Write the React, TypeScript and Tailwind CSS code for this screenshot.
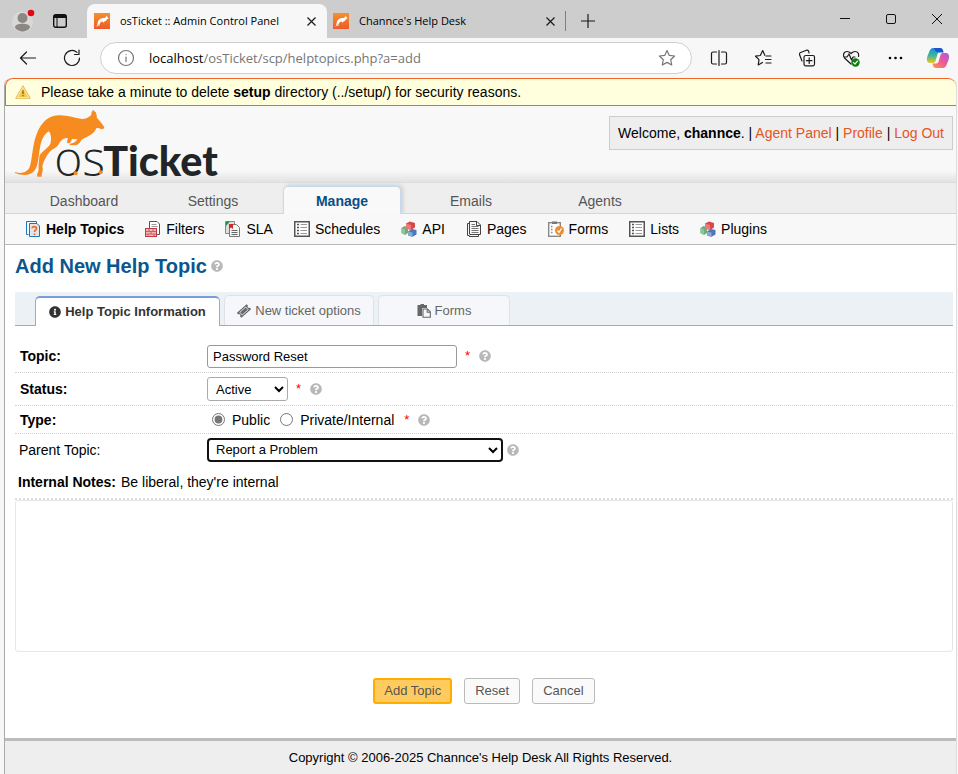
import React from "react";
import { FaInfoCircle, FaQuestionCircle } from "react-icons/fa";

const ROO =
  "M42 288C60 294 80 291 87 270C95 245 94 205 108 172C120 142 140 119 172 118C200 117 222 127 243 129C256 130 265 122 271 117C270 110 274 104 277 102C280 106 282 108 284 108C287 112 287 120 288 126C295 134 304 143 310 154C309 159 304 161 300 159C294 157 290 155 286 157C282 166 275 174 264 179C255 184 246 187 241 192C237 200 232 207 222 208L206 207L207 203C216 203 224 199 229 190L214 189C208 195 210 200 204 202L198 201L200 186C190 184 180 192 175 202C168 216 156 218 148 226C138 236 128 254 124 272C128 282 122 291 122 302L109 302C106 296 112 288 113 280C112 270 114 250 116 238C124 224 144 216 149 200C152 186 150 176 144 166C130 174 122 190 118 210C112 236 114 262 102 282C90 300 64 300 42 291Z";

function Favicon() {
  return (
    <svg width="16" height="16" viewBox="0 0 16 16" className="shrink-0" aria-hidden="true">
      <defs>
        <linearGradient id="fav" x1="0" y1="0" x2="0" y2="1">
          <stop offset="0" stopColor="#f7902a" />
          <stop offset="1" stopColor="#ee5a28" />
        </linearGradient>
      </defs>
      <rect width="16" height="16" fill="url(#fav)" />
      <path
        d="M1.500 13.500C4 13.500 3 10 4.500 7.500C5.800 5.300 8 4.600 10.300 5C11.500 5 12 4 12.800 2.800L13.400 4L14.600 5.600L13 6.200C12.300 7.600 11.300 8 10.500 8.400L9.300 9.800L8.800 8.600C7 8.600 6.300 9.800 5.600 11L5.300 13L4.600 13.200L4.600 10.500C4.200 12.300 3.300 14 1.500 13.500Z"
        fill="#fff"
      />
    </svg>
  );
}

function Logo() {
  return (
    <svg width="204" height="72" viewBox="36 96 612 216" className="overflow-visible" role="img" aria-label="osTicket">
      <path d={ROO} fill="#f68b1f" />
      <g fill="#222527">
        <text x="160" y="300" fontSize="144" fontWeight="300" fontFamily="'Open Sans', sans-serif">os</text>
        <text x="307" y="300" fontSize="124" fontWeight="900" fontFamily="Lato, sans-serif">Ticket</text>
      </g>
      <circle cx="224" cy="292" r="6" fill="#f68b1f" />
      <circle cx="299" cy="289" r="6" fill="#f68b1f" />
    </svg>
  );
}

function Stroke({ children, size = 18, color = "#1b1b1b" }: { children: React.ReactNode; size?: number; color?: string }) {
  return (
    <svg width={size} height={size} viewBox="0 0 18 18" fill="none" stroke={color} strokeWidth="1.2" strokeLinecap="round" strokeLinejoin="round" aria-hidden="true">
      {children}
    </svg>
  );
}

function Copilot() {
  return (
    <svg width="24" height="22" viewBox="0 0 24 22" aria-hidden="true">
      <defs>
        <linearGradient id="cpa" x1="0" y1="0" x2="0" y2="1">
          <stop offset="0" stopColor="#1b8fe0" />
          <stop offset="0.5" stopColor="#3fb59a" />
          <stop offset="1" stopColor="#f5c61e" />
        </linearGradient>
        <linearGradient id="cpb" x1="1" y1="0" x2="0" y2="1">
          <stop offset="0" stopColor="#a55bea" />
          <stop offset="0.5" stopColor="#ee5a93" />
          <stop offset="1" stopColor="#fa9a4a" />
        </linearGradient>
      </defs>
      <path d="M8 1H14C16 1 17 2.500 17.500 5H14C12 5 11.500 7 11 9L9.500 14C9 15.500 8 16 6.500 16H4C0.500 16 0.500 12 1.500 9L3.500 4C4.500 1.500 6 1 8 1Z" fill="url(#cpa)" />
      <path d="M8 1H14C16 1 17 2.500 17.500 5.500H13C9 5.500 8 1.500 8 1Z" fill="#1d55c9" />
      <path d="M16 21H10C8 21 7 19.500 6.500 16.500H10C12 16.500 12.500 15 13 13L14.500 8C15 6.500 16 6 17.500 6H20C23.500 6 23.500 10 22.500 13L20.500 18C19.500 20.500 18 21 16 21Z" fill="url(#cpb)" />
    </svg>
  );
}

function TicketIcon() {
  return (
    <svg width="14" height="14" viewBox="0 0 14 14" aria-hidden="true">
      <g transform="rotate(-42 7 7)">
        <path d="M0.500 3.700H13.500V5.800A1.200 1.200 0 0 0 13.500 8.200V10.300H0.500V8.200A1.200 1.200 0 0 0 0.500 5.800Z" fill="#666" />
        <rect x="3" y="5.200" width="8" height="3.600" fill="none" stroke="#f5f7fa" strokeWidth="0.800" />
      </g>
    </svg>
  );
}

function PasteIcon() {
  return (
    <svg width="14" height="14" viewBox="0 0 14 14" aria-hidden="true">
      <path d="M0.500 1H3.500V0H7V1H10V4H5V12H0.500Z" fill="#666" />
      <path d="M6 5H10.500L13.300 7.800V13.300H6Z" fill="#f5f7fa" stroke="#666" strokeWidth="1.100" />
      <path d="M10.200 5V8.200H13.300" fill="none" stroke="#666" strokeWidth="1.100" />
    </svg>
  );
}

function DocIcon({ kind }: { kind: string }) {
  return (
    <svg width="16" height="16" viewBox="0 0 16 16" fill="none" className="shrink-0" aria-hidden="true">
      {kind === "help" && (
        <>
          <path d="M3.500 13.500H1.500V0.500H11.500V2" stroke="#1a76bd" />
          <path d="M4.500 2.500H12L14.500 5V15.500H4.500Z" fill="#e2e6ea" stroke="#1a76bd" />
          <path d="M7.200 7.200C7.200 5 11.500 5 11.500 7.400C11.500 9 9.500 9 9.500 11M9.500 12.500V14" stroke="#ee6a24" strokeWidth="1.700" />
        </>
      )}
      {kind === "filters" && (
        <>
          <path d="M4.500 7V0.500H12L14.500 3V13.500H12" fill="#fff" stroke="#555" />
          <path d="M6.500 3.500H11.500M6.500 5.500H12.500" stroke="#999" />
          <rect x="0.500" y="7.500" width="11" height="8" fill="#f3b7b7" stroke="#bd3b41" />
          <path d="M1 10.500H11M1 13H11M4 8V10M8 8V10M6 11V13M3 13V15M9 13V15" stroke="#bd3b41" strokeWidth="0.700" />
        </>
      )}
      {kind === "sla" && (
        <>
          <path d="M0.500 0.500H9.500V12.500H0.500Z" fill="#ddd" stroke="#888" />
          <path d="M1 0.500H5L1 5Z" fill="#17984a" />
          <path d="M4.500 3.500H11.500L14.500 6.500V15.500H4.500Z" fill="#f5f5f5" stroke="#777" />
          <path d="M6.500 9.500H12.500M6.500 11.500H12.500M6.500 13.500H12.500" stroke="#666" />
          <path d="M4 3H8V8L6 6.500L4 8Z" fill="#d92525" />
        </>
      )}
      {kind === "list" && (
        <>
          <rect x="0.750" y="0.750" width="14.500" height="14.500" fill="#fff" stroke="#555" strokeWidth="1.500" />
          <path d="M3 3.500H5M3 6.500H5M3 9.500H5M3 12.500H5" stroke="#555" strokeWidth="1.600" />
          <path d="M6.500 3.500H13M6.500 6.500H13M6.500 9.500H13M6.500 12.500H13" stroke="#999" />
        </>
      )}
      {kind === "blocks" && (
        <>
          <path d="M0.500 7L3.500 5L7 6V12L4 14L0.500 12Z" fill="#6fae7c" />
          <path d="M0.500 7L4 8.500V14L0.500 12Z" fill="#8ec797" />
          <path d="M5 2.500L9 0.500L14 2V6.500L10 9L5 7.500Z" fill="#d94848" />
          <path d="M5 2.500L10 4V9L5 7.500Z" fill="#ee7a78" />
          <path d="M7 10.500L11 8L15.500 9V13.500L11.500 15.800L7 14.500Z" fill="#4d78b5" />
          <path d="M7 10.500L11.500 11.500V15.800L7 14.500Z" fill="#84a8d8" />
        </>
      )}
      {kind === "pages" && (
        <>
          <path d="M3.500 14.500H1.500V2.500H3M3.500 13V0.500H11L14.500 4V13.500H3.500" stroke="#444" />
          <path d="M3 15.500H12.500V14M10.500 0.500V4.500H14.500" stroke="#444" />
          <path d="M5.500 3.500H9M5.500 5.500H12.500M5.500 7.500H12.500M5.500 9.500H12.500M5.500 11.500H12.500" stroke="#777" />
        </>
      )}
      {kind === "forms" && (
        <>
          <rect x="0.700" y="1.700" width="11.600" height="13.600" fill="#fff" stroke="#888" strokeWidth="1.400" />
          <rect x="4" y="0.500" width="5" height="2.500" fill="#777" />
          <path d="M3 5.500H4.500M3 8.500H4.500M3 11.500H4.500" stroke="#888" strokeWidth="1.500" />
          <circle cx="11.500" cy="9.500" r="4.500" fill="#f28a2e" />
          <path d="M9.500 9.500L11 11.300L13.500 7.500" stroke="#fff" strokeWidth="1.300" />
        </>
      )}
    </svg>
  );
}

const subNav = [
  ["Help Topics", "help"],
  ["Filters", "filters"],
  ["SLA", "sla"],
  ["Schedules", "list"],
  ["API", "blocks"],
  ["Pages", "pages"],
  ["Forms", "forms"],
  ["Lists", "list"],
  ["Plugins", "blocks"],
];

function Tip() {
  return (
    <button type="button" aria-label="Help" className="text-[#b8b8b8]">
      <FaQuestionCircle size={12} />
    </button>
  );
}

function Star() {
  return <span className="text-[13px] leading-4 text-[#f00]">*</span>;
}

function CloseTab() {
  return (
    <button type="button" aria-label="Close tab">
      <svg width="9" height="9" viewBox="0 0 9 9" stroke="#1b1b1b" strokeWidth="1.200">
        <path d="M0.500 0.500L8.500 8.500M8.500 0.500L0.500 8.500" />
      </svg>
    </button>
  );
}

function BrowserBar() {
  return (
    <header className="font-['Open_Sans',sans-serif] text-black">
      <div className="flex h-[38px] items-end bg-[#cdcdcd]">
        <div className="flex h-full w-[87px] shrink-0 items-center gap-[18px] pt-1 pl-3">
          <svg width="23" height="24" viewBox="0 0 23 24" aria-label="Profile" role="img">
            <circle cx="10.500" cy="13" r="10.500" fill="#dad8d6" />
            <circle cx="10.500" cy="9" r="5" fill="#8b8785" />
            <path d="M3 18C3 13.500 18 13.500 18 18C18 20 14 22.500 10.500 22.500S3 20 3 18Z" fill="#8b8785" />
            <circle cx="19" cy="4" r="3.300" fill="#e20613" />
          </svg>
          <svg width="14" height="14" viewBox="0 0 14 14" fill="none" aria-hidden="true">
            <rect x="0.700" y="0.700" width="12.600" height="12.600" rx="2" stroke="#111" strokeWidth="1.400" />
            <path d="M1 1H13V4H1Z" fill="#111" />
            <path d="M4 4V13" stroke="#111" />
          </svg>
        </div>
        <div className="flex h-[34px] w-[240px] shrink-0 items-center gap-2.5 rounded-t-lg bg-[#f7f7f7] pr-[11px] pl-[7px]">
          <Favicon />
          <span className="grow text-[11px] whitespace-nowrap">osTicket :: Admin Control Panel</span>
          <CloseTab />
        </div>
        <div className="flex h-[34px] w-[238px] shrink-0 items-center gap-2.5 pr-2.5 pl-[6px]">
          <Favicon />
          <span className="grow text-[11px] whitespace-nowrap">Channce's Help Desk</span>
          <CloseTab />
        </div>
        <div className="flex h-[34px] grow items-center gap-[15px]">
          <span className="h-5 w-px bg-[#808080]" />
          <button type="button" aria-label="New tab">
            <svg width="14" height="14" viewBox="0 0 14 14" stroke="#1b1b1b" strokeWidth="1.200"><path d="M7 0V14M0 7H14" /></svg>
          </button>
        </div>
        <div className="flex h-full items-center gap-9 pr-4">
          <button type="button" aria-label="Minimize"><svg width="10" height="10" viewBox="0 0 10 10" stroke="#111"><path d="M0 4.500H10" /></svg></button>
          <button type="button" aria-label="Maximize"><svg width="10" height="10" viewBox="0 0 10 10" fill="none" stroke="#111"><rect x="0.500" y="0.500" width="9" height="9" rx="1.500" /></svg></button>
          <button type="button" aria-label="Close"><svg width="10" height="10" viewBox="0 0 10 10" stroke="#111"><path d="M0 0L10 10M10 0L0 10" /></svg></button>
        </div>
      </div>
      <div className="flex h-10 items-center bg-[#f7f7f7] pr-2 pl-[19px]">
        <div className="flex w-[81px] shrink-0 gap-[26px]">
          <button type="button" aria-label="Back"><Stroke><path d="M16.500 9H1.500M7.500 3L1.500 9L7.500 15" /></Stroke></button>
          <button type="button" aria-label="Refresh"><Stroke><path d="M16.500 9A7.500 7.500 0 1 1 14 3.400M16 1V5.500H11.500" /></Stroke></button>
        </div>
        <div className="flex h-8 grow items-center rounded-full border border-[#cfcfcf] bg-white px-4">
          <Stroke color="#767676"><circle cx="9" cy="9" r="7.500" /><path d="M9 8V12.500M9 5.500V5.600" /></Stroke>
          <span className="grow pl-3.5 text-[13px] leading-5 whitespace-nowrap text-[#767676]">
            <span className="text-black">localhost</span>/osTicket/scp/helptopics.php?a=add
          </span>
          <button type="button" aria-label="Add to favorites" className="-mr-px">
            <Stroke color="#767676"><path d="M9 1.500L11.300 6.400L16.600 7L12.700 10.700L13.700 16L9 13.400L4.300 16L5.300 10.700L1.400 7L6.700 6.400Z" /></Stroke>
          </button>
        </div>
        <div className="flex items-center gap-[26px] pl-[18px]">
          <button type="button" aria-label="Split screen"><Stroke><path d="M6.500 3H3Q1.500 3 1.500 4.500V13.500Q1.500 15 3 15H6.500M11.500 3H15Q16.500 3 16.500 4.500V13.500Q16.500 15 15 15H11.500M9 1.500V16.500" /></Stroke></button>
          <button type="button" aria-label="Favorites"><Stroke><path d="M10.800 6.300L8.700 1.500L6.300 6.500L1.500 7.200L5 10.600L4.200 16L8.500 13.500M12 7H17M11.500 10.500H17M12 14H17" /></Stroke></button>
          <button type="button" aria-label="Collections"><Stroke><path d="M4 12L1.500 5.500Q1.300 4 2.500 3.500L8.500 1.200Q10 1 10.700 2.300L11 4M8 6.500H15Q16.500 6.500 16.500 8V15Q16.500 16.800 15 16.800H8Q6 16.800 6 15V8Q6 6.500 8 6.500ZM11.200 8.800V14.500M8.400 11.700H14" /></Stroke></button>
          <button type="button" aria-label="Browser essentials">
            <Stroke>
              <path d="M9 15L2.500 9C0.500 6.500 1.500 2.500 5 2.500C7 2.500 8.500 4 9 4.500C9.500 4 11 2.500 13 2.500C16.500 2.500 17 5.500 16.500 7.500M2 8H5L7 5L9.500 11L11 8H13" />
              <circle cx="13.500" cy="13.500" r="4.200" fill="#107c10" stroke="none" />
              <path d="M11.500 13.600L13 15L15.500 12.200" stroke="#fff" />
            </Stroke>
          </button>
          <button type="button" aria-label="Settings and more"><svg width="18" height="18" viewBox="0 0 18 18"><circle cx="4" cy="9" r="1.300" /><circle cx="9.500" cy="9" r="1.300" /><circle cx="15" cy="9" r="1.300" /></svg></button>
          <button type="button" aria-label="Copilot" className="-ml-1"><Copilot /></button>
        </div>
      </div>
    </header>
  );
}

export default function App() {
  return (
    <div className="flex min-h-screen flex-col bg-[#f7f7f7] font-['Liberation_Sans',Arial,sans-serif] text-sm leading-4 text-black">
      <BrowserBar />
      <div className="mr-px ml-1 flex grow flex-col overflow-hidden rounded-t-lg border-r border-l border-r-[#ddd] border-l-[#aaa] bg-white">
        <div className="flex h-7 items-center gap-2.5 rounded-t-lg border border-r-0 border-[#f26522] bg-[#ffffdd] pl-[9px]">
          <svg width="16" height="14" viewBox="0 0 16 14" aria-hidden="true">
            <path d="M8 0.800L15.300 13.300H0.700Z" fill="#fdf3cf" stroke="#dcb95a" />
            <path d="M8 3L13 12H3Z" fill="#f5c845" />
            <path d="M8 5.500V9M8 10V11.300" stroke="#8a6a1a" strokeWidth="1.400" />
          </svg>
          <p>
            Please take a minute to delete <strong>setup</strong> directory (../setup/) for security reasons.
          </p>
        </div>

        <div className="flex h-[76px] items-start justify-between bg-linear-to-b from-[#f8f8f8] from-85% to-[#e2e2e2] pt-0.5 pr-[3px] pl-2">
          <Logo />
          <p className="mt-2 border border-[#ccc] bg-[#eee] px-2 py-2">
            Welcome, <strong>channce</strong>. | <a href="#agent" className="text-[#e65524]">Agent Panel</a> |{" "}
            <a href="#profile" className="text-[#e65524]">Profile</a> | <a href="#logout" className="text-[#e65524]">Log Out</a>
          </p>
        </div>

        <nav className="flex h-8 items-end gap-[11px] border-t border-b border-t-[#ddd] border-b-[#c5d9f1] bg-[#eee] pl-5">
          {["Dashboard", "Settings", "Manage", "Emails", "Agents"].map((t) =>
            t === "Manage" ? (
              <a key={t} href="#manage" className="-mb-px flex h-7 w-[118px] items-center justify-center rounded-t-[5px] border border-b-0 border-[#c5d9f1] bg-[#f9f9f9] font-bold text-[#0a4d85] shadow-[2px_-1px_4px_#ccc]">
                {t}
              </a>
            ) : (
              <a key={t} href={"#" + t} className="flex h-6 w-[118px] items-center justify-center text-[#555]">
                {t}
              </a>
            ),
          )}
        </nav>

        <nav className="relative flex h-[31px] items-center gap-[21px] border-b border-[#bbb] bg-[#f8f8f8] pl-5">
          {subNav.map(([label, icon], i) => (
            <a key={label} href={"#" + label} className={i === 0 ? "flex items-center gap-[5px] font-bold" : "flex items-center gap-[5px]"}>
              <DocIcon kind={icon} />
              {label}
            </a>
          ))}
        </nav>

        <form className="flex grow flex-col pt-[7px] pr-[3px] pl-2.5" onSubmit={(e) => e.preventDefault()}>
          <div className="flex items-center gap-1">
            <h1 className="text-xl leading-7 font-bold text-[#0a568e]">Add New Help Topic</h1>
            <Tip />
          </div>

          <div className="mt-3 flex h-[34px] items-end gap-1 border-b border-[#aaa] bg-[#ecf1f6] pl-5 text-[13px]" role="tablist">
            <button type="button" role="tab" aria-selected="true" className="-mb-px flex h-[30px] w-[185px] items-center justify-center gap-1 rounded-t-[5px] border border-t-2 border-b-0 border-[#aaa] border-t-[#7a9fd8] bg-white font-bold text-[#333]">
              <FaInfoCircle size={12} />
              Help Topic Information
            </button>
            <button type="button" role="tab" aria-selected="false" className="flex h-[30px] w-[150px] items-center justify-center gap-1 rounded-t-[5px] border border-b-0 border-[#dfe2e8] bg-[#f5f7fa] text-[#666]">
              <TicketIcon />
              New ticket options
            </button>
            <button type="button" role="tab" aria-selected="false" className="flex h-[30px] w-[132px] items-center justify-center gap-1 rounded-t-[5px] border border-b-0 border-[#dfe2e8] bg-[#f5f7fa] text-[#666]">
              <PasteIcon />
              Forms
            </button>
          </div>

          <div className="mt-3.5 flex h-[33px] items-center border-b border-dotted border-[#d0d0d0]">
            <label htmlFor="topic" className="w-[192px] pl-[5px] font-bold">Topic:</label>
            <input id="topic" defaultValue="Password Reset" className="mr-2 h-[23px] w-[250px] rounded-[3px] border border-[#999] bg-white px-[5px] text-[13px] outline-none" />
            <Star />
            <span className="ml-[9px] flex"><Tip /></span>
          </div>
          <div className="flex h-[33px] items-center border-b border-dotted border-[#d0d0d0]">
            <label htmlFor="status" className="w-[192px] pl-[5px] font-bold">Status:</label>
            <select id="status" className="mr-2 h-6 w-[81px] rounded-[3px] border border-[#aaa] bg-white px-1 text-[13px]">
              <option>Active</option>
              <option>Disabled</option>
            </select>
            <Star />
            <span className="ml-[9px] flex"><Tip /></span>
          </div>
          <div role="radiogroup" aria-labelledby="type" className="flex h-7 items-center border-b border-dotted border-[#d0d0d0]">
            <span id="type" className="w-[197px] pl-[5px] font-bold">Type:</span>
            <input id="public" type="radio" name="type" defaultChecked className="mr-[7px] size-[13px] accent-[#767676]" />
            <label htmlFor="public" className="mr-2.5">Public</label>
            <input id="private" type="radio" name="type" className="mr-[7px] size-[13px] accent-[#767676]" />
            <label htmlFor="private" className="mr-2.5">Private/Internal</label>
            <Star />
            <span className="ml-[9px] flex"><Tip /></span>
          </div>
          <div className="flex h-[31px] items-center">
            <label htmlFor="parent" className="w-[192px] pl-1">Parent Topic:</label>
            <select id="parent" className="mr-1 h-6 w-[296px] rounded-[4px] border-2 border-[#111] bg-white px-[3px] text-[13px]">
              <option>Report a Problem</option>
            </select>
            <Tip />
          </div>
          <label htmlFor="notes" className="flex h-[35px] items-center gap-[5px] border-b-2 border-dotted border-[#ddd] pl-[3px]">
            <strong>Internal Notes:</strong> Be liberal, they're internal
          </label>
          <textarea id="notes" className="h-[152px] w-full resize-none rounded-[3px] border border-[#e6e6e6] bg-white p-2 outline-none" />

          <div className="mt-[26px] mb-[34px] flex justify-center gap-3 text-[13px] text-[#555]">
            <button type="submit" className="h-[26px] rounded-[3px] border-2 border-[#ffad00] bg-[#ffcb5e] px-[9px]">Add Topic</button>
            <button type="reset" className="h-[26px] rounded-[3px] border border-[#bbb] bg-[#fafafa] px-2.5">Reset</button>
            <button type="button" className="h-[26px] rounded-[3px] border border-[#bbb] bg-[#fafafa] px-2.5">Cancel</button>
          </div>
        </form>

        <footer className="flex h-9 items-center justify-center border-t-[3px] border-[#bbb] bg-[#eee] text-[13px]">
          Copyright © 2006-2025 Channce's Help Desk All Rights Reserved.
        </footer>
      </div>
    </div>
  );
}
